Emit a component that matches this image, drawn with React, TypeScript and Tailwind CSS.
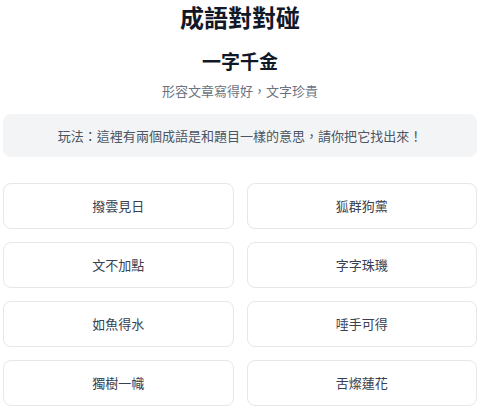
import React from 'react';

const options = ['撥雲見日', '狐群狗黨', '文不加點', '字字珠璣', '如魚得水', '唾手可得', '獨樹一幟', '舌燦蓮花'];

// Taiwan style: full-width punctuation sits in the middle of its cell
function Tw({ children }: { children: string }) {
  return (
    <>
      {Array.from(children).map((ch, i) =>
        ch === '，' || ch === '：' || ch === '！' ? (
          <span key={i} className="inline-block w-[1em] text-center">
            {ch}
          </span>
        ) : (
          ch
        )
      )}
    </>
  );
}

export default function App() {
  const [picked, setPicked] = React.useState<string[]>([]);

  const toggle = (word: string) => {
    setPicked(prev => (prev.includes(word) ? prev.filter(w => w !== word) : [...prev, word]));
  };

  return (
    <div lang="zh-TW" className="min-h-screen bg-white px-[3px] font-['Noto_Sans_CJK_TC','Noto_Sans',sans-serif]">
      <h1 className="text-center text-[24px] font-bold leading-[34px] text-[#111827]">成語對對碰</h1>
      <h2 className="mt-[13px] text-center text-[19px] font-bold leading-[28px] text-[#111827]">一字千金</h2>
      <p className="mt-[6px] text-center text-[13px] leading-[20px] text-[#6b7280]">
        <Tw>形容文章寫得好，文字珍貴</Tw>
      </p>

      <div className="mt-[13px] flex h-[43px] items-center justify-center rounded-lg bg-[#f3f4f6] text-[13px] text-[#4b5563]">
        <span>
          <Tw>玩法：這裡有兩個成語是和題目一樣的意思，請你把它找出來！</Tw>
        </span>
      </div>

      <div className="mt-[26px] grid grid-cols-2 gap-[13px]">
        {options.map(word => (
          <button
            key={word}
            onClick={() => toggle(word)}
            className={`h-[46px] rounded-lg border text-[13px] text-[#374151] transition-colors ${
              picked.includes(word) ? 'border-[#93c5fd] bg-[#eff6ff]' : 'border-[#e5e7eb] bg-white hover:bg-[#f9fafb]'
            }`}
          >
            {word}
          </button>
        ))}
      </div>
    </div>
  );
}
